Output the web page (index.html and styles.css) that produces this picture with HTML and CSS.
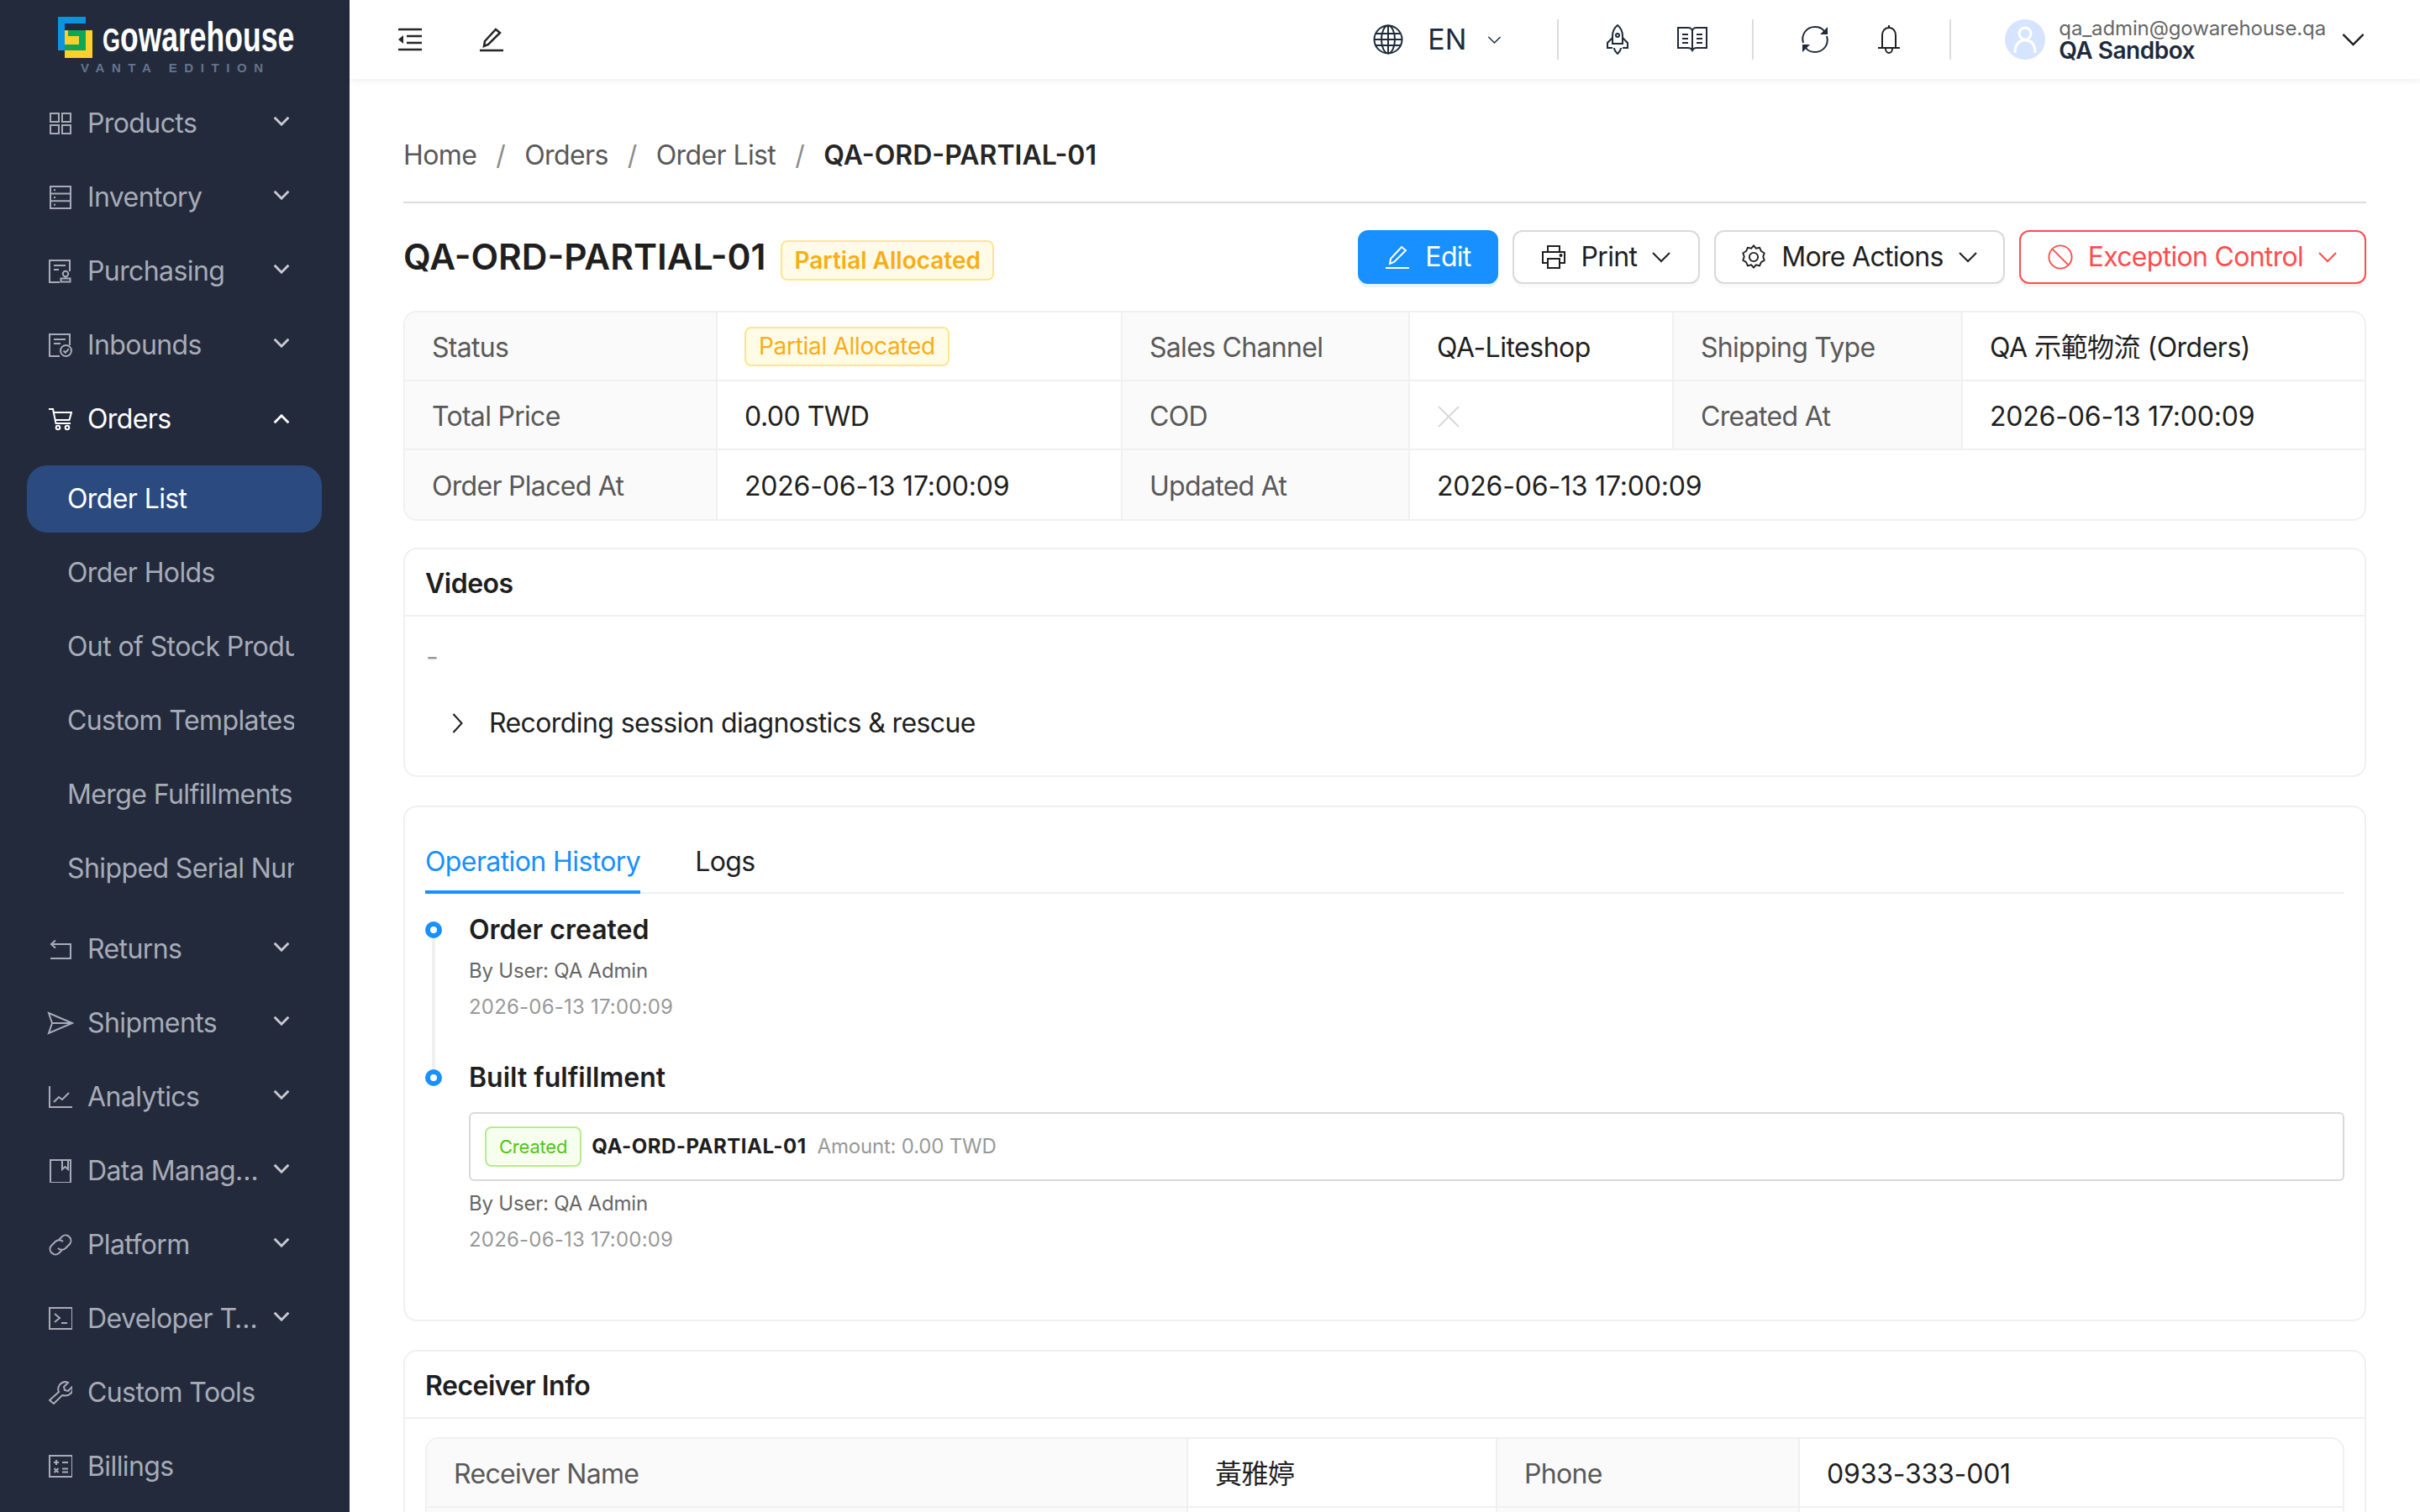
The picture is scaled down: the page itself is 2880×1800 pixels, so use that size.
FILE: index.html
```html
<!DOCTYPE html>
<html lang="en">
<head>
    <meta charset="UTF-8">
    <title>QA-ORD-PARTIAL-01</title>
    <link rel="stylesheet" href="styles.css">
</head>
<body>
<svg class="sprite" xmlns="http://www.w3.org/2000/svg">
    <symbol id="i-products" viewBox="0 0 28 28"><path d="M2 2h10v10H2zM16 2h10v10H16zM2 16h10v10H2zM16 16h10v10H16z"/></symbol>
    <symbol id="i-inventory" viewBox="0 0 28 28"><path d="M2 1h24v26H2zM2 9.600h24M2 18.300h24M6 5.300h2M6 14h2M6 22.700h2"/></symbol>
    <symbol id="i-purchasing" viewBox="0 0 28 28"><path d="M13 27H1V1h24v13M6 7h14M6 12h6"/><circle cx="20" cy="17" r="3.200"/><path d="M20 20.200v2M14.500 22.500h11v4h-11z"/></symbol>
    <symbol id="i-inbounds" viewBox="0 0 28 28"><path d="M13 27H1V1h24v13M6 7h14M6 12h8"/><circle cx="20.500" cy="20.500" r="6.500"/><path d="M17.500 20.500l2.300 2.300 4-4.300"/></symbol>
    <symbol id="i-cart" viewBox="0 0 28 28"><path d="M0 2h5l3.500 17H26M6 6h21l-2.500 9H8"/><circle cx="11" cy="24" r="2.300"/><circle cx="22" cy="24" r="2.300"/></symbol>
    <symbol id="i-returns" viewBox="0 0 28 28"><path d="M2 25h24V8H4M8 3.500L3 8l5 4.500"/></symbol>
    <symbol id="i-send" viewBox="0 0 32 28"><path d="M2 2l28 12L2 26l4-12zM6 14h24"/></symbol>
    <symbol id="i-chart" viewBox="0 0 28 28"><path d="M1 1v25h27M6 20l6-6 4 3 8-8"/></symbol>
    <symbol id="i-data" viewBox="0 0 28 28"><path d="M2 1h24v27H2zM16 1v11l3.500-3 3.500 3V1"/></symbol>
    <symbol id="i-link" viewBox="0 0 28 28"><path d="M12 8l4-4a6.400 6.400 0 0 1 9 9l-5 5a6.400 6.400 0 0 1-9 0M16 20l-4 4a6.400 6.400 0 0 1-9-9l5-5a6.400 6.400 0 0 1 9 0"/></symbol>
    <symbol id="i-code" viewBox="0 0 28 28"><path d="M1 1h27v25H1zM7 8l6 5-6 5M15 19h7"/></symbol>
    <symbol id="i-tool" viewBox="0 0 28 28"><path d="M1 23l11-10c-2-4 0-9 4-11 2-1 5-1 7 0l-5 5 1 4 4 1 5-5c1 3 0 6-2 8-3 3-6 3-10 2L6 27z"/></symbol>
    <symbol id="i-calc" viewBox="0 0 28 28"><path d="M1 1h27v25H1zM6 9h6M9 6v6M16 9h7M6.500 16l5 5M11.500 16l-5 5M16 16.500h7M16 20.500h7"/></symbol>
    <symbol id="i-down" viewBox="0 0 24 14"><path d="M2 2l10 10L22 2"/></symbol>
    <symbol id="i-up" viewBox="0 0 24 14"><path d="M2 12L12 2l10 10"/></symbol>
    <symbol id="i-right" viewBox="0 0 14 24"><path d="M2 1l10 11L2 23"/></symbol>
    <symbol id="i-fold" viewBox="0 0 30 28"><path d="M1 2h28M11 10h18M11 18h18M1 26h28"/><path class="solid" d="M1 14l6-5v10z"/></symbol>
    <symbol id="i-pencil" viewBox="0 0 30 30"><path d="M1 28h28M6 23l1-6L20 3l5 4L11 21z"/></symbol>
    <symbol id="i-globe" viewBox="0 0 36 36"><circle cx="18" cy="18" r="16.500"/><ellipse cx="18" cy="18" rx="8" ry="16.500"/><path d="M18 1.500v33M3 11h30M3 25h30M1.500 18h33"/></symbol>
    <symbol id="i-rocket" viewBox="0 0 30 36"><path d="M15 1c5 4 6 9 6 13v9H9v-9c0-4 1-9 6-13zM9 16l-6 6v6h6M21 16l6 6v6h-6M11 28c0 3 2 5 4 7 2-2 4-4 4-7"/><circle cx="15" cy="13" r="2"/></symbol>
    <symbol id="i-book" viewBox="0 0 36 30"><path d="M1 1h12c3 0 5 2 5 4 0-2 2-4 5-4h12v24H23c-2 0-4 1-5 3-1-2-3-3-5-3H1zM18 5v23M6 9h7M6 14h7M6 19h7M23 9h7M23 14h7M23 19h7"/></symbol>
    <symbol id="i-sync" viewBox="0 0 36 36"><path d="M4 22C1 12 8 3 18 3c4 0 8 1 11 5M32 14c3 10-4 19-14 19-4 0-8-1-11-5"/><path class="solid" d="M33 3v9h-9zM3 33v-9h9z"/></symbol>
    <symbol id="i-bell" viewBox="0 0 28 36"><path d="M6 28V13c0-5 3-9 8-9s8 4 8 9v15M1 28h26M14 1v3M10 29c0 3 2 5 4 5s4-2 4-5"/></symbol>
    <symbol id="i-printer" viewBox="0 0 30 30"><path d="M8 9V2h14v7M8 22H2V9h26v13h-6M8 17h14v11H8z"/><circle cx="23.500" cy="13" r="1"/></symbol>
    <symbol id="i-gear" viewBox="0 0 30 32"><path d="M15 1.500l3 3.500 4.500-1 2 4.500 4 2.500-1.500 4.500 1.500 4.500-4 2.500-2 4.500-4.500-1-3 3.500-3-3.500-4.500 1-2-4.500-4-2.500 1.500-4.500L1.500 11l4-2.500 2-4.500 4.500 1z"/><circle cx="15" cy="16" r="5.500"/></symbol>
    <symbol id="i-stop" viewBox="0 0 32 32"><circle cx="16" cy="16" r="14.500"/><path d="M6 6l20 20"/></symbol>
    <symbol id="i-close" viewBox="0 0 28 26"><path d="M2 1l24 24M26 1L2 25"/></symbol>
</svg>

<div class="layout">
    <aside class="sidebar">
        <div class="logo">
            <svg class="logo-mark" viewBox="0 0 41 49" aria-hidden="true">
                <path fill="#0f93dc" d="M0 0h33v8H8v32H0z"/>
                <path fill="#fdd02b" d="M8 16h33v33H8z"/>
                <path fill="#10a653" d="M12 16h21v24H8v-7h17V23H12z"/>
                <path fill="#fdd02b" d="M8 23h17v10H8z"/>
            </svg>
            <div class="logo-word"><span class="logo-g">G</span>owarehouse</div>
            <div class="logo-sub">VANTA EDITION</div>
        </div>
        <nav class="menu">
            <a class="menu-row"><svg class="ico"><use href="#i-products"/></svg><span class="menu-label">Products</span><svg class="menu-arrow"><use href="#i-down"/></svg></a>
            <a class="menu-row"><svg class="ico"><use href="#i-inventory"/></svg><span class="menu-label">Inventory</span><svg class="menu-arrow"><use href="#i-down"/></svg></a>
            <a class="menu-row"><svg class="ico"><use href="#i-purchasing"/></svg><span class="menu-label">Purchasing</span><svg class="menu-arrow"><use href="#i-down"/></svg></a>
            <a class="menu-row"><svg class="ico"><use href="#i-inbounds"/></svg><span class="menu-label">Inbounds</span><svg class="menu-arrow"><use href="#i-down"/></svg></a>
            <a class="menu-row open"><svg class="ico"><use href="#i-cart"/></svg><span class="menu-label">Orders</span><svg class="menu-arrow"><use href="#i-up"/></svg></a>
            <div class="submenu">
                <a class="sub-item active"><span class="sub-label">Order List</span></a>
                <a class="sub-item"><span class="sub-label">Order Holds</span></a>
                <a class="sub-item"><span class="sub-label">Out of Stock Products</span></a>
                <a class="sub-item"><span class="sub-label">Custom Templates</span></a>
                <a class="sub-item"><span class="sub-label">Merge Fulfillments</span></a>
                <a class="sub-item"><span class="sub-label">Shipped Serial Numbers</span></a>
            </div>
            <a class="menu-row"><svg class="ico"><use href="#i-returns"/></svg><span class="menu-label">Returns</span><svg class="menu-arrow"><use href="#i-down"/></svg></a>
            <a class="menu-row"><svg class="ico ico-wide"><use href="#i-send"/></svg><span class="menu-label">Shipments</span><svg class="menu-arrow"><use href="#i-down"/></svg></a>
            <a class="menu-row"><svg class="ico"><use href="#i-chart"/></svg><span class="menu-label">Analytics</span><svg class="menu-arrow"><use href="#i-down"/></svg></a>
            <a class="menu-row"><svg class="ico"><use href="#i-data"/></svg><span class="menu-label">Data Management</span><svg class="menu-arrow"><use href="#i-down"/></svg></a>
            <a class="menu-row"><svg class="ico"><use href="#i-link"/></svg><span class="menu-label">Platform</span><svg class="menu-arrow"><use href="#i-down"/></svg></a>
            <a class="menu-row"><svg class="ico"><use href="#i-code"/></svg><span class="menu-label">Developer Tools</span><svg class="menu-arrow"><use href="#i-down"/></svg></a>
            <a class="menu-row"><svg class="ico"><use href="#i-tool"/></svg><span class="menu-label">Custom Tools</span></a>
            <a class="menu-row"><svg class="ico"><use href="#i-calc"/></svg><span class="menu-label">Billings</span></a>
        </nav>
    </aside>

    <div class="main">
        <header class="topbar">
            <svg class="top-fold"><use href="#i-fold"/></svg>
            <svg class="top-pencil"><use href="#i-pencil"/></svg>
            <div class="top-right">
                <svg class="top-globe"><use href="#i-globe"/></svg>
                <span class="top-lang">EN</span>
                <svg class="top-lang-arrow"><use href="#i-down"/></svg>
                <span class="top-sep sep-a"></span>
                <svg class="top-rocket"><use href="#i-rocket"/></svg>
                <svg class="top-book"><use href="#i-book"/></svg>
                <span class="top-sep sep-b"></span>
                <svg class="top-sync"><use href="#i-sync"/></svg>
                <svg class="top-bell"><use href="#i-bell"/></svg>
                <span class="top-sep sep-c"></span>
                <div class="avatar">
                    <svg viewBox="0 0 48 48"><circle cx="24" cy="17" r="7"/><path d="M12 40c0-11 5-15 12-15s12 4 12 15"/></svg>
                </div>
                <div class="user">
                    <div class="user-mail">qa_admin@gowarehouse.qa</div>
                    <div class="user-name">QA Sandbox</div>
                </div>
                <svg class="top-user-arrow"><use href="#i-down"/></svg>
            </div>
        </header>

        <main class="content">
            <div class="crumbs">
                <span>Home</span><i>/</i><span>Orders</span><i>/</i><span>Order List</span><i>/</i><b>QA-ORD-PARTIAL-01</b>
            </div>

            <div class="title-row">
                <h1>QA-ORD-PARTIAL-01</h1>
                <span class="tag tag-gold tag-title">Partial Allocated</span>
                <div class="actions">
                    <button class="btn btn-primary"><svg class="btn-ico"><use href="#i-pencil"/></svg>Edit</button>
                    <button class="btn"><svg class="btn-ico"><use href="#i-printer"/></svg>Print<svg class="btn-arrow"><use href="#i-down"/></svg></button>
                    <button class="btn btn-more"><svg class="btn-ico"><use href="#i-gear"/></svg>More Actions<svg class="btn-arrow"><use href="#i-down"/></svg></button>
                    <button class="btn btn-danger"><svg class="btn-ico"><use href="#i-stop"/></svg>Exception Control<svg class="btn-arrow"><use href="#i-down"/></svg></button>
                </div>
            </div>

            <div class="desc">
                <table class="desc-table order-table">
                    <colgroup><col class="c1"><col class="c2"><col class="c3"><col class="c4"><col class="c5"><col></colgroup>
                    <tr>
                        <th>Status</th><td><span class="tag tag-gold tag-cell">Partial Allocated</span></td>
                        <th>Sales Channel</th><td>QA-Liteshop</td>
                        <th>Shipping Type</th><td>QA 示範物流 (Orders)</td>
                    </tr>
                    <tr>
                        <th>Total Price</th><td>0.00 TWD</td>
                        <th>COD</th><td><svg class="cod-no"><use href="#i-close"/></svg></td>
                        <th>Created At</th><td class="date">2026-06-13 17:00:09</td>
                    </tr>
                    <tr>
                        <th>Order Placed At</th><td class="date">2026-06-13 17:00:09</td>
                        <th>Updated At</th><td class="date" colspan="3">2026-06-13 17:00:09</td>
                    </tr>
                </table>
            </div>

            <section class="card videos-card">
                <div class="card-head">Videos</div>
                <div class="videos-body">
                    <div class="dash">-</div>
                    <div class="collapse-row"><svg class="collapse-arrow"><use href="#i-right"/></svg>Recording session diagnostics &amp; rescue</div>
                </div>
            </section>

            <section class="card history-card">
                <div class="tabs">
                    <span class="tab active">Operation History</span>
                    <span class="tab">Logs</span>
                </div>
                <div class="timeline">
                    <div class="tl-item has-tail">
                        <span class="tl-dot"></span>
                        <div class="tl-title">Order created</div>
                        <div class="tl-meta">By User: QA Admin</div>
                        <div class="tl-meta tl-date">2026-06-13 17:00:09</div>
                    </div>
                    <div class="tl-item">
                        <span class="tl-dot"></span>
                        <div class="tl-title">Built fulfillment</div>
                        <div class="tl-box">
                            <span class="tag tag-green">Created</span>
                            <b>QA-ORD-PARTIAL-01</b>
                            <span class="tl-amount">Amount: 0.00 TWD</span>
                        </div>
                        <div class="tl-meta">By User: QA Admin</div>
                        <div class="tl-meta tl-date">2026-06-13 17:00:09</div>
                    </div>
                </div>
            </section>

            <section class="card">
                <div class="card-head">Receiver Info</div>
                <div class="receiver-body">
                    <div class="desc">
                        <table class="desc-table receiver-table">
                            <colgroup><col class="r1"><col class="r2"><col class="r3"><col></colgroup>
                            <tr><th>Receiver Name</th><td>黃雅婷</td><th>Phone</th><td class="date">0933-333-001</td></tr>
                            <tr><th></th><td></td><th></th><td></td></tr>
                        </table>
                    </div>
                </div>
            </section>
        </main>
    </div>
</div>
</body>
</html>
```

FILE: styles.css
```css
* {
    box-sizing: border-box;
}
html, body {
    margin: 0;
    height: 1800px;
    overflow: hidden;
}
body {
    font-family: Inter, "Noto Sans CJK TC", sans-serif;
    font-size: 32px;
    line-height: 44px;
    letter-spacing: -.6px;
    color: #1f1f1f;
    background: #fff;
}
.sprite {
    display: none;
}
svg {
    fill: none;
    stroke: currentColor;
    stroke-width: 2;
    flex: none;
}
svg .solid {
    fill: currentColor;
    stroke: none;
}
.layout {
    display: flex;
    height: 1800px;
}

/* sidebar */
.sidebar {
    width: 416px;
    flex: none;
    background: #232a3b;
    color: #a7acb8;
    overflow: hidden;
}
.logo {
    position: relative;
    height: 107px;
}
.logo-mark {
    position: absolute;
    left: 69px;
    top: 20px;
    width: 41px;
    height: 49px;
    stroke: none;
}
.logo-word {
    position: absolute;
    left: 122px;
    top: 16px;
    font-family: "Liberation Sans", sans-serif;
    font-size: 50px;
    line-height: 56px;
    font-weight: 700;
    letter-spacing: 0;
    color: #fff;
    transform: scaleX(.71);
    transform-origin: left center;
    white-space: nowrap;
}
.logo-g {
    font-size: 38px;
}
.logo-sub {
    position: absolute;
    left: 96px;
    top: 72px;
    font-family: "Liberation Sans", sans-serif;
    font-size: 15px;
    line-height: 18px;
    font-weight: 700;
    letter-spacing: 8.6px;
    color: #667590;
    white-space: nowrap;
}
.menu {
    display: flex;
    flex-direction: column;
    gap: 8px;
}
.menu-row {
    display: flex;
    align-items: center;
    height: 80px;
    padding: 0 71px 0 58px;
}
.menu-row.open {
    color: #fff;
}
.ico {
    width: 28px;
    height: 28px;
    margin-right: 18px;
}
.ico-wide {
    width: 32px;
    margin: 0 16px 0 -2px;
}
.menu-label {
    width: 204px;
    overflow: hidden;
    white-space: nowrap;
    text-overflow: ellipsis;
}
.menu-arrow {
    width: 20px;
    height: 12px;
    margin-left: auto;
    margin-bottom: 6px;
    stroke-width: 3.5;
    color: #c7cad1;
}
.menu-row.open .menu-arrow {
    color: #fff;
    margin-bottom: 0;
}
.submenu {
    display: flex;
    flex-direction: column;
    gap: 8px;
    padding: 7px 33px 8px 32px;
}
.sub-item {
    display: block;
    height: 80px;
    line-height: 80px;
    padding: 0 33px 0 48px;
    border-radius: 24px;
}
.sub-item.active {
    background: #2b4a7f;
    color: #fff;
}
.sub-label {
    display: block;
    white-space: nowrap;
    overflow: hidden;
}

/* top bar */
.main {
    flex: 1;
    min-width: 0;
}
.topbar {
    position: relative;
    display: flex;
    align-items: center;
    height: 94px;
    background: #fff;
    box-shadow: 0 2px 8px rgba(0, 0, 0, .07);
    padding: 0 65px 0 57px;
}
.top-fold {
    width: 30px;
    height: 28px;
    stroke-width: 2.5;
    color: #262626;
}
.top-pencil {
    width: 30px;
    height: 30px;
    margin-left: 67px;
    stroke-width: 2.5;
    color: #262626;
}
.top-right {
    display: flex;
    align-items: center;
    margin-left: auto;
    color: #1e2a3c;
}
.top-globe {
    width: 36px;
    height: 36px;
}
.top-lang {
    margin-left: 29px;
    font-size: 34px;
    width: 47px;
    letter-spacing: 0;
}
.top-lang-arrow {
    width: 17px;
    height: 11px;
    margin-left: 24px;
}
.top-sep {
    width: 2px;
    height: 48px;
    background: #dcdcdc;
}
.sep-a {
    margin: 0 55px 0 66px;
}
.sep-b {
    margin: 0 55px 0 53px;
}
.sep-c {
    margin: 0 64px 0 58px;
}
.top-rocket {
    width: 30px;
    height: 36px;
}
.top-book {
    width: 36px;
    height: 30px;
    margin-left: 56px;
}
.top-sync {
    width: 36px;
    height: 36px;
}
.top-bell {
    width: 28px;
    height: 36px;
    margin-left: 56px;
    color: #1f1f1f;
}
.avatar {
    width: 48px;
    height: 48px;
    border-radius: 50%;
    background: #d6e4ff;
}
.avatar svg {
    display: block;
    width: 48px;
    height: 48px;
    stroke: #fff;
    stroke-width: 3;
}
.user {
    margin-left: 16px;
}
.user-mail {
    font-size: 24px;
    line-height: 26px;
    letter-spacing: -.12px;
    color: #666;
}
.user-name {
    font-size: 28px;
    line-height: 26px;
    font-weight: 600;
    letter-spacing: -.5px;
    color: #1e2a3c;
}
.top-user-arrow {
    width: 29px;
    height: 18px;
    margin-left: 18px;
    color: #1f1f1f;
}

/* page */
.content {
    padding: 69px 64px 0;
}
.crumbs {
    display: flex;
    height: 44px;
    color: #595959;
}
.crumbs i {
    font-style: normal;
    color: #8c8c8c;
    margin: 0 23px;
}
.crumbs b {
    font-weight: 600;
    letter-spacing: 0;
    color: #262626;
}
.title-row {
    display: flex;
    align-items: center;
    margin-top: 33px;
    padding-top: 32px;
    border-top: 2px solid #dcdcdc;
    height: 98px;
}
h1 {
    margin: 0;
    font-size: 42.500px;
    font-weight: 600;
    line-height: 64px;
    letter-spacing: 0;
}
.tag {
    display: inline-block;
    border: 2px solid;
    border-radius: 8px;
    white-space: nowrap;
}
.tag-gold {
    color: #faad14;
    background: #fffbe6;
    border-color: #ffe58f;
}
.tag-title {
    margin: 8px 0 0 18px;
    font-size: 28px;
    font-weight: 600;
    line-height: 44px;
    letter-spacing: 0;
    padding: 0 14px;
}
.tag-cell {
    font-size: 28px;
    line-height: 43px;
    letter-spacing: -.3px;
    padding: 0 15px;
    vertical-align: middle;
    margin-top: -6px;
}
.actions {
    display: flex;
    gap: 17px;
    margin-left: auto;
}
.btn {
    display: flex;
    align-items: center;
    height: 64px;
    padding: 0 32px;
    background: #fff;
    border: 2px solid #d9d9d9;
    border-radius: 12px;
    box-shadow: 0 4px 0 rgba(0, 0, 0, .02);
    font: inherit;
    letter-spacing: -.7px;
    color: #1f1f1f;
    white-space: nowrap;
}
.btn-primary {
    padding: 0 30px;
    background: #1890ff;
    border-color: #1890ff;
    color: #fff;
    box-shadow: 0 4px 0 rgba(5, 145, 255, .1);
}
.btn-more {
    padding: 0 30px;
}
.btn-danger {
    border-color: #ff4d4f;
    color: #ff4d4f;
    box-shadow: 0 4px 0 rgba(255, 38, 5, .06);
}
.btn-ico {
    width: 30px;
    height: 30px;
    margin-right: 18px;
}
.btn-arrow {
    width: 24px;
    height: 14px;
    margin-left: 17px;
}

/* description tables */
.desc {
    margin-top: 32px;
    border: 2px solid #f0f0f0;
    border-radius: 16px;
    overflow: hidden;
}
.desc-table {
    width: 100%;
    table-layout: fixed;
    border-collapse: separate;
    border-spacing: 0;
}
.desc-table th,
.desc-table td {
    height: 82px;
    padding: 4px 32px 0;
    text-align: left;
    font-weight: 400;
    letter-spacing: -.5px;
    border-right: 2px solid #f0f0f0;
    border-bottom: 2px solid #f0f0f0;
}
.desc-table tr > :last-child {
    border-right: 0;
}
.desc-table tr:last-child > * {
    border-bottom: 0;
}
.desc-table th {
    background: #fafafa;
    color: #595959;
    letter-spacing: -.7px;
}
.desc-table .date {
    letter-spacing: -.2px;
}
.c1 { width: 372px; }
.c2 { width: 482px; }
.c3 { width: 342px; }
.c4 { width: 314px; }
.c5 { width: 344px; }
.r1 { width: 906px; }
.r2 { width: 368px; }
.r3 { width: 360px; }
.cod-no {
    display: block;
    width: 28px;
    height: 26px;
    color: #d9d9d9;
}

/* cards */
.card {
    margin-top: 34px;
    border: 2px solid #f0f0f0;
    border-radius: 16px;
}
.videos-card {
    margin-top: 32px;
}
.card-head {
    display: flex;
    align-items: center;
    height: 80px;
    padding: 4px 0 0 24px;
    border-bottom: 2px solid #f0f0f0;
    font-weight: 600;
    letter-spacing: -.5px;
}
.videos-body {
    padding: 26px 25px 40px;
}
.dash {
    color: #999;
}
.collapse-row {
    display: flex;
    align-items: center;
    margin-top: 35px;
    padding-left: 29px;
}
.collapse-arrow {
    width: 17px;
    height: 24px;
    margin-right: 29px;
}
.receiver-body {
    padding: 0 24px;
}
.receiver-body .desc {
    margin-top: 22px;
    border-bottom: 0;
}

/* operation history */
.history-card {
    height: 614px;
}
.tabs {
    display: flex;
    gap: 65px;
    margin: 0 24px;
    border-bottom: 2px solid #f0f0f0;
}
.tab {
    padding: 43px 0 12px;
    border-bottom: 4px solid transparent;
    margin-bottom: -2px;
}
.tab.active {
    color: #1890ff;
    border-bottom-color: #1890ff;
}
.timeline {
    margin: 21px 24px 0;
}
.tl-item {
    position: relative;
    padding-left: 52px;
}
.tl-item.has-tail {
    height: 176px;
}
.tl-dot {
    position: absolute;
    left: 0;
    top: 12px;
    width: 20px;
    height: 20px;
    border: 6px solid #1890ff;
    border-radius: 50%;
    background: #fff;
}
.has-tail::before {
    content: "";
    position: absolute;
    left: 8px;
    top: 32px;
    bottom: -12px;
    width: 4px;
    background: #f0f0f0;
}
.tl-title {
    font-weight: 600;
    letter-spacing: 0;
}
.tl-meta {
    margin-top: 10px;
    font-size: 24px;
    line-height: 33px;
    letter-spacing: -.2px;
    color: #666;
}
.tl-date {
    letter-spacing: .2px;
    color: #999;
}
.tl-box {
    display: flex;
    align-items: center;
    height: 82px;
    margin-top: 19px;
    padding-left: 17px;
    border: 2px solid #d9d9d9;
    border-radius: 6px;
    font-size: 24px;
    letter-spacing: -.2px;
}
.tl-box b {
    font-weight: 700;
    letter-spacing: .5px;
    margin-left: 12px;
}
.tag-green {
    font-size: 22px;
    color: #52c41a;
    background: #f6ffed;
    border-color: #b7eb8f;
    line-height: 44px;
    padding: 0 15px;
}
.tl-amount {
    margin-left: 13px;
    color: #999;
}
```
